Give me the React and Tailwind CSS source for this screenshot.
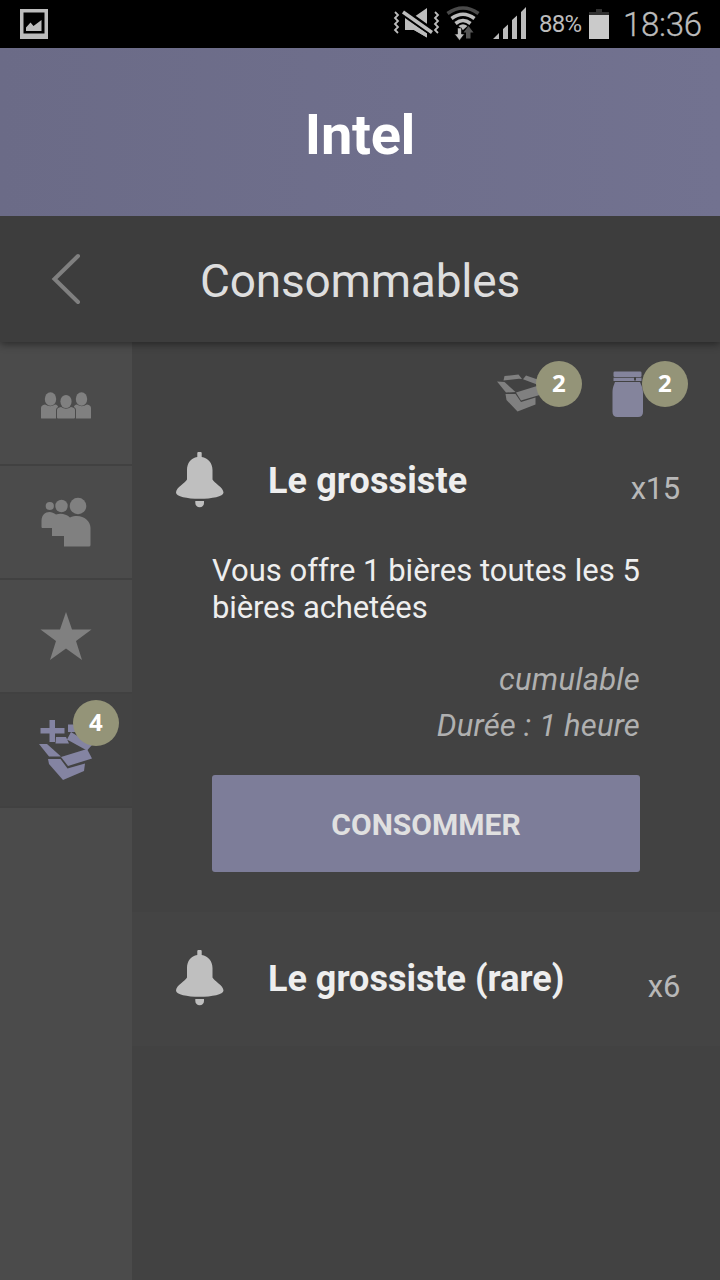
import React from "react";

const Bell = () => (
  <svg className="block h-[56px] w-[48px]" viewBox="0 0 48 56" fill="#bfbfbf">
    <path d="M21.300 5V1Q21.300 0 22.300 0H24.700Q25.700 0 25.700 1V5C32 6 36.500 11 36.500 18V27.500C38 31 47.500 35.500 47.500 40.500C47.500 44.500 36 46.800 23.500 46.800S0 44.500 0 40.500C0 35.500 9.500 31 11 27.500V18C11 11 15 6 21.300 5Z" />
    <path d="M19.300 49H28V51C28 53.500 26.200 55.300 23.700 55.300S19.300 53.500 19.300 51Z" />
  </svg>
);

const BoxShape = () => (
  <>
    <path d="M7.500 2L21.500 0.500L25 5L22 4.700L6.500 6.500Z" />
    <path d="M29 1.500L48 8L45 12L40 10.500L26 5.200Z" />
    <path d="M0 7.500L7.500 8L18.500 18L9 18.500Z" />
    <path d="M19 18.500L40 12L46 20L24 26.500Z" />
    <path d="M8.500 20H18.500L24 28L38.500 23.500V30.500L20.500 37.500L9.500 26Z" />
  </>
);

const Badge = ({ children, className }) => (
  <span className={`absolute flex size-[45.5px] items-center justify-center rounded-full bg-[#949478] pb-px font-['Open_Sans',sans-serif] text-[24px] leading-none font-bold text-white ${className}`}>
    {children}
  </span>
);

const StatusBar = () => (
  <div className="flex h-12 shrink-0 items-center bg-black text-[#bcbcbc]">
    <svg className="ml-5 block h-[30px] w-[28px]" viewBox="0 0 28 30" fill="#bcbcbc">
      <path fillRule="evenodd" d="M0 0H28V30H0ZM3.500 3.500V24.500H24.500V3.500Z" />
      <path d="M6 22V18.500L10.500 13.500L13.500 17L21.500 11V22Z" />
    </svg>
    <svg className="ml-auto block h-12 w-[141px] shrink-0" viewBox="0 0 141 48" fill="#bcbcbc">
      <path d="M15 18V30H24L37 37.500V8L24 17Z" />
      <path d="M12 11L43 33" stroke="#000" strokeWidth="8" />
      <path d="M13 12L42 32.500" stroke="#bcbcbc" strokeWidth="3.500" />
      <path d="M15 19V30H24L37 37.500V33.500Z" />
      <path d="M5 12L8 15L5 18L8 21L5 24L8 27L5 30L8 33M45 12L48 15L45 18L48 21L45 24L48 27L45 30L48 33" fill="none" stroke="#bcbcbc" strokeWidth="1.800" />
      <g fill="none" strokeWidth="3.600">
        <path d="M57.500 13.500Q73 2.500 88.500 13.500" stroke="#4a4a4a" />
        <path d="M61.500 18.500Q73 10 84.500 18.500M65.500 23.500Q73 17.500 80.500 23.500" stroke="#bcbcbc" />
      </g>
      <path d="M68.500 26Q73 22.500 77.500 26L73 30Z" />
      <path d="M67.500 28H71.500V34H74.500L69.500 40.500L64.500 34H67.500Z" stroke="#000" strokeWidth="0.600" />
      <path d="M76 38.500V32.500H73.500L78.500 26L83.500 32.500H80.500V38.500Z" fill="#555" />
      <path d="M103 39L109 33V39ZM113 29L118 24.500V39H113ZM122 20L127 15.500V39H122ZM131 12L136 7V39H131Z" />
    </svg>
    <span className="w-[49px] shrink-0 whitespace-nowrap pl-[8px] font-['Roboto',sans-serif] text-[24px] leading-none tracking-[-0.800px]">88%</span>
    <svg className="ml-[9px] block h-[30px] w-[20px] shrink-0" viewBox="0 0 20 30">
      <path d="M7 0H13V3H20V30H0V3H7Z" fill="#303030" />
      <path d="M0 6H20V30H0Z" fill="#cacaca" />
    </svg>
    <span className="mr-[17px] ml-[14px] w-[80px] shrink-0 font-['Roboto',sans-serif] text-[33px] leading-none font-light tracking-[-0.300px] whitespace-nowrap [-webkit-text-stroke:0.300px_#bcbcbc]">18:36</span>
  </div>
);

const Sidebar = () => (
  <nav className="flex w-[132px] shrink-0 flex-col bg-[#4b4b4b]">
    <div className="flex h-[124px] items-center justify-center border-b-2 border-[#414141] pt-[5px]">
      <svg className="block h-[28px] w-[50px]" viewBox="0 0 50 28" fill="#808080">
        <ellipse cx="9.500" cy="7" rx="5.700" ry="6.700" />
        <ellipse cx="40.500" cy="7" rx="5.700" ry="6.700" />
        <path d="M0 26V16Q0 13 4 12.500Q9.500 16 14 12.500Q17 13 17 15Q15 16 15 18V26.500H1Q0 26.500 0 26ZM50 26V16Q50 13 46 12.500Q40.500 16 36 12.500Q33 13 33 15Q35 16 35 18V26.500H49Q50 26.500 50 26Z" />
        <ellipse cx="25" cy="9.500" rx="5.600" ry="6.600" />
        <path d="M16 25.500V18Q16 15.500 20 15Q25 18.500 30 15Q34 15.500 34 18V25.500Q34 26.500 33 26.500H17Q16 26.500 16 25.500Z" />
      </svg>
    </div>
    <div className="flex h-[114px] items-center justify-center border-b-2 border-[#414141]">
      <svg className="block h-[50px] w-[50px]" viewBox="0 0 50 50" fill="#808080">
        <circle cx="8.800" cy="9" r="4.100" />
        <circle cx="20.500" cy="9" r="6.200" />
        <circle cx="37" cy="9" r="8.300" />
        <path d="M0.500 30V24C0.500 15 9 12.500 15 17.500C20 16 25 17 29 20.500C39 16 49.500 22 49.500 31V48Q49.500 49.500 48 49.500H23V39H11V31H1.500Q0.500 31 0.500 30Z" />
      </svg>
    </div>
    <div className="flex h-[114px] items-center justify-center border-b-2 border-[#414141]">
      <svg className="block h-[48px] w-[52px]" viewBox="0 0 52 48" fill="#808080">
        <path d="M26 0L32 17.500H51.500L36 29L42 48L26 36.500L10 48L16 29L0.500 17.500H20Z" />
      </svg>
    </div>
    <div className="relative h-[114px] border-b-2 border-[#414141] bg-[#434343]">
      <svg className="mt-[25px] ml-[39px] block h-[62px] w-[54px]" viewBox="0 0 54 62" fill="#8484a2">
        <path d="M10.500 1H16V9H25.500V14.500H16V23H10.500V14.500H1.500V9H10.500Z" />
        <path d="M17 18H27L30 24.500H16.500ZM29 5.500H44V13H29ZM32 13L53 26L48 31.500L28 20.500Z" />
        <path d="M0 25H8L22 37.500H10Z" />
        <path d="M22 38L48 30L53 39.500L29 47Z" />
        <path d="M9 40H21.500L28.500 49.500L46 44.500L45 52L24 61L10 45Z" />
      </svg>
      <Badge className="top-[6px] left-[73px]">4</Badge>
    </div>
  </nav>
);

const Content = () => (
  <main className="flex min-w-0 flex-1 flex-col bg-[#424242] font-['Roboto',sans-serif] text-[#eeeeee]">
    <div className="flex h-[92px] shrink-0">
      <div className="relative ml-[365px] h-full w-[84px]">
        <svg className="mt-[32px] block h-[39px] w-[50px]" viewBox="0 0 50 39" fill="#808080"><BoxShape /></svg>
        <Badge className="top-[19px] left-[39px]">2</Badge>
      </div>
      <div className="relative ml-[30px] h-full w-[76px]">
        <svg className="mt-[29px] ml-px block h-[47px] w-[32px]" viewBox="0 0 32 47" fill="#84849c">
          <rect x="1.500" y="0.500" width="28" height="5.500" rx="1.200" />
          <path d="M1.500 6.700H22V9.500H24V6.700H29.500V10H1.500Z" />
          <path d="M3 11H28C29 14 31 16 31 22V41Q31 46 26 46H5.500Q0.500 46 0.500 41V22C0.500 16 2 14 3 11Z" />
        </svg>
        <Badge className="top-[19px] left-[31px]">2</Badge>
      </div>
    </div>
    <section className="h-[478px] shrink-0">
      <div className="flex h-[92px] pt-[18px] pr-10 pl-11">
        <Bell />
        <h2 className="ml-11 pt-[8px] text-[36px] leading-[42px] font-bold tracking-[0.100px] whitespace-nowrap">Le grossiste</h2>
        <span className="ml-auto pt-[18px] text-[31px] leading-[38px] tracking-[-0.300px] text-[#b8b8b8]">x15</span>
      </div>
      <div className="mr-20 ml-20 pt-[26px]">
        <p className="text-[31px] leading-[37px] whitespace-nowrap">Vous offre 1 bières toutes les 5<br /><span className="tracking-[-0.120px]">bières achetées</span></p>
        <p className="mt-[31px] text-right text-[31px] leading-[46px] tracking-[0.200px] text-[#b0b0b0] italic">cumulable<br />Durée : 1 heure</p>
        <button className="mt-[26px] block h-[97px] w-full rounded-[3px] bg-[#7d7d99] pt-[2px] text-[30px] leading-none font-bold text-[#e0e0e0]">CONSOMMER</button>
      </div>
    </section>
    <section className="flex h-[134px] shrink-0 bg-[#444444] pt-[38px] pr-10 pl-11">
      <Bell />
      <h2 className="ml-11 pt-[8px] text-[36px] leading-[42px] font-bold whitespace-nowrap">Le grossiste (rare)</h2>
      <span className="ml-auto pt-[18px] text-[31px] leading-[38px] tracking-[-0.300px] text-[#b8b8b8]">x6</span>
    </section>
  </main>
);

export default function App() {
  return (
    <div className="flex h-[1280px] w-[720px] flex-col overflow-hidden bg-[#424242]">
      <StatusBar />
      <header className="relative z-20 flex h-[168px] shrink-0 items-center justify-center bg-linear-to-r from-[#6b6b87] to-[#727290] pt-[5px] font-['Roboto',sans-serif] text-[56px] leading-none font-bold tracking-[-0.300px] text-white">
        Intel
      </header>
      <div className="relative z-10 flex h-[126px] shrink-0 items-center justify-center bg-[#3d3d3d] font-['Roboto',sans-serif] text-[46px] leading-none tracking-[-0.200px] text-[#dedede] shadow-[0_2px_8px_rgba(0,0,0,0.45)]">
        <button className="absolute top-[37px] left-[51px]" aria-label="Retour">
          <svg className="block h-[52px] w-[30px]" viewBox="0 0 30 52"><path d="M27 3L3.500 26L27 49" fill="none" stroke="#808080" strokeWidth="4" strokeLinecap="round" /></svg>
        </button>
        <span className="pt-1">Consommables</span>
      </div>
      <div className="flex min-h-0 flex-1">
        <Sidebar />
        <Content />
      </div>
    </div>
  );
}
